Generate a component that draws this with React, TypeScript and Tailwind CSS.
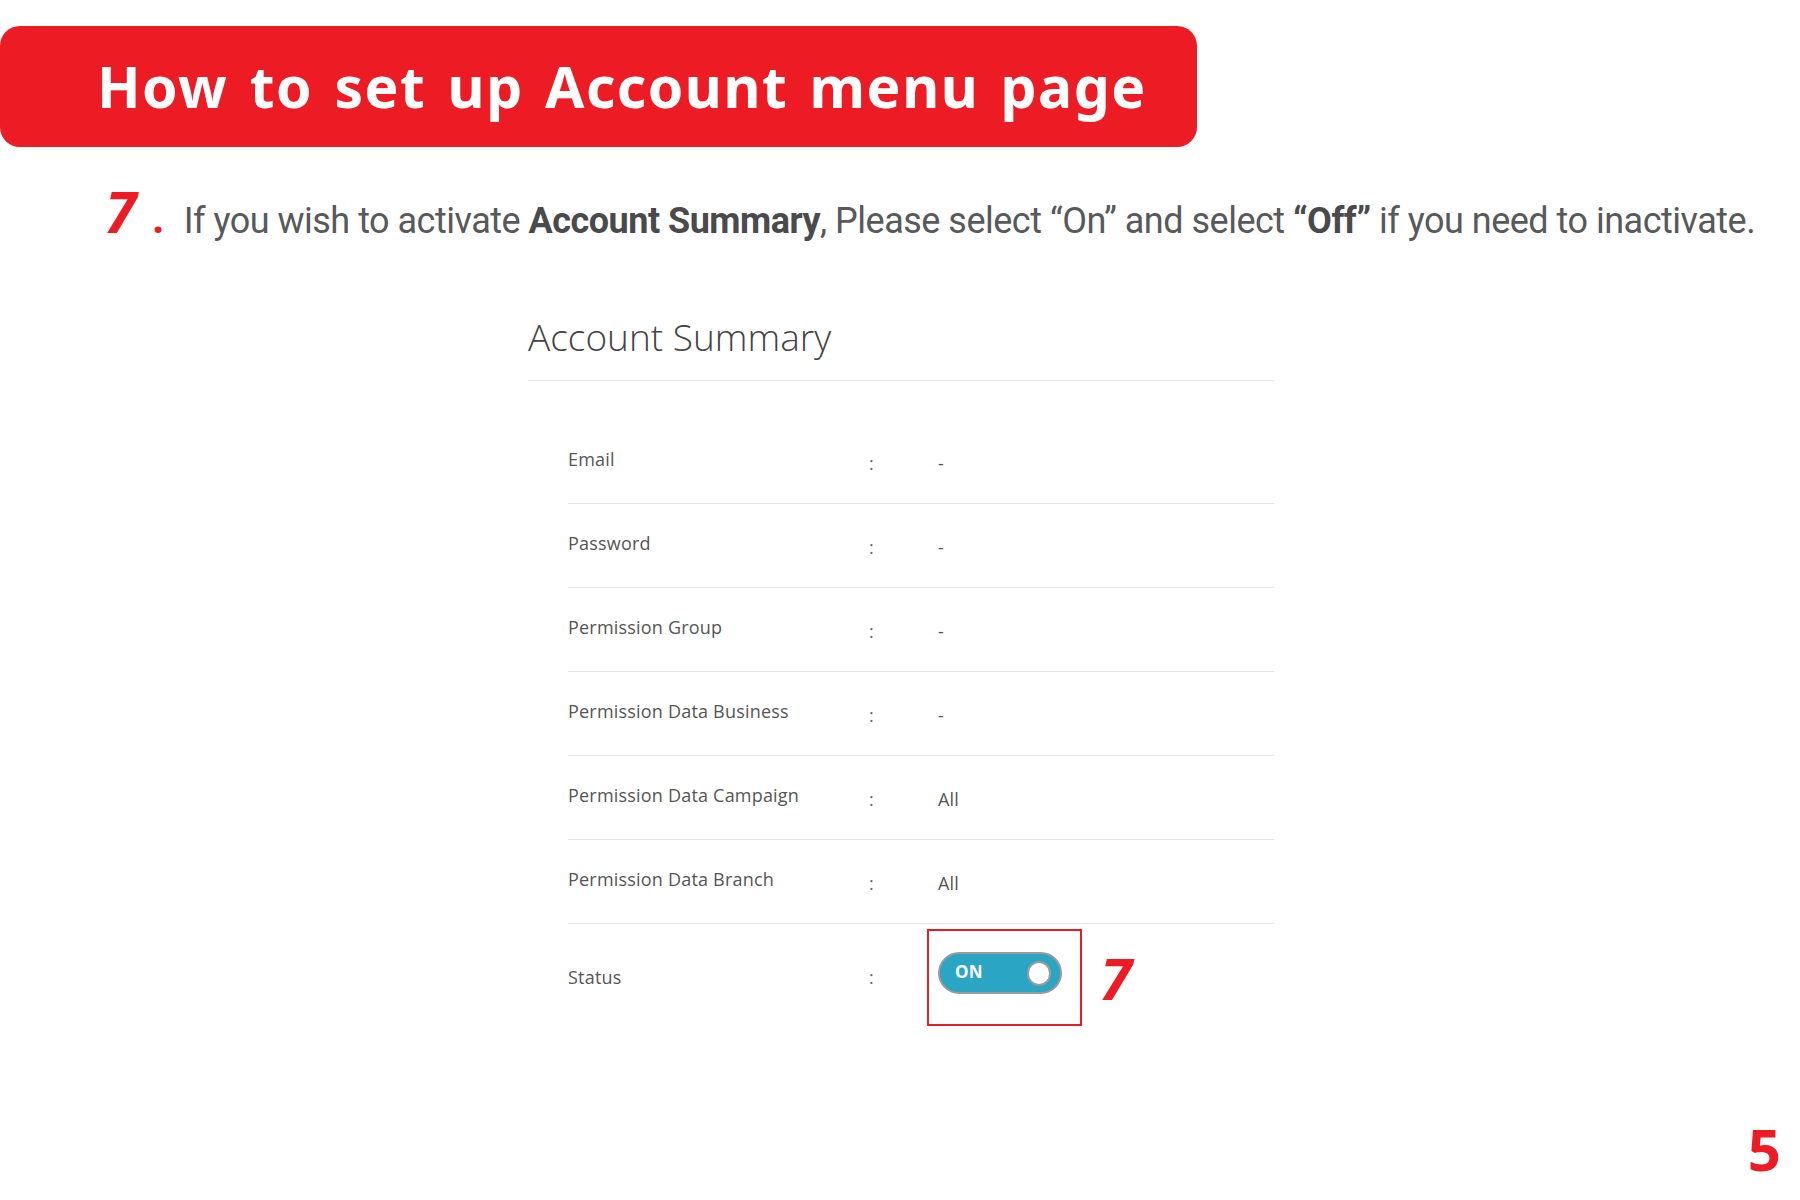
import React from "react"

const rows = [
  { label: "Email", value: "-" },
  { label: "Password", value: "-" },
  { label: "Permission Group", value: "-" },
  { label: "Permission Data Business", value: "-" },
  { label: "Permission Data Campaign", value: "All" },
  { label: "Permission Data Branch", value: "All" },
]

const StatusToggle = () => (
  <div className="w-[124px] h-[42px] rounded-full border-2 border-[#9b9b9b] bg-[#2aa5c4] flex items-center justify-between pl-[15px] pr-[9px]">
    <span className="text-white font-bold text-[17px] leading-none mb-[3px]">ON</span>
    <span className="w-[24px] h-[25px] rounded-full bg-white border-2 border-[#9b9b9b]" />
  </div>
)

export default function App() {
  return (
    <div className="w-[1800px] h-[1200px] bg-white flex flex-col overflow-hidden font-['Noto_Sans',sans-serif]">
      {/* Banner */}
      <div className="mt-[26px] h-[121px] w-[1197px] rounded-[20px] bg-[#ed1c24] flex items-center pl-[97px]">
        <h1 className="text-white font-bold text-[57px] leading-none tracking-[1.5px] [word-spacing:5px]">
          How to set up Account menu page
        </h1>
      </div>

      {/* Step line */}
      <div className="mt-[36px] flex items-baseline pl-[105px] leading-none">
        <span className="text-[#ed1c24] font-bold italic text-[57px]">7</span>
        <span className="text-[#ed1c24] font-bold text-[40px] ml-[16px]">.</span>
        <p className="ml-[20px] text-[36px] text-[#58595b] tracking-[-0.5px] font-['Roboto',sans-serif]">
          If you wish to activate <b className="text-[#4a4a4c]">Account Summary</b>, Please select “On” and select{" "}
          <b className="text-[#4a4a4c]">“Off”</b> if you need to inactivate.
        </p>
      </div>

      {/* Account Summary panel */}
      <div className="ml-[528px] w-[746px] mt-[78px] font-['Open_Sans',sans-serif]">
        <h2 className="text-[37px] font-light text-[#444] leading-none pb-[25px] border-b border-[#e5e5e5]">
          Account Summary
        </h2>

        <div className="ml-[40px] mt-[39px]">
          {rows.map((r) => (
            <div key={r.label} className="h-[84px] flex items-center border-b border-[#e5e5e5] text-[18px] tracking-[0.2px] text-[#555]">
              <span className="w-[301px] pb-[5px]">{r.label}</span>
              <span className="w-[69px] pt-[3px] text-[#666]">:</span>
              <span className="pt-[3px]">{r.value}</span>
            </div>
          ))}

          <div className="flex items-center pt-[5px] text-[18px] tracking-[0.2px] text-[#555]">
            <span className="w-[301px]">Status</span>
            <span className="w-[69px] text-[#666]">:</span>
            <div className="-ml-[11px] w-[155px] h-[97px] border-2 border-[#e41e26] pl-[9px] pt-[21px]">
              <StatusToggle />
            </div>
            <span className="ml-[18px] text-[#ed1c24] font-bold italic text-[58px] leading-none font-['Noto_Sans',sans-serif]">
              7
            </span>
          </div>
        </div>
      </div>

      {/* Page number */}
      <div className="mt-auto flex justify-end pr-[19px] pb-[22px]">
        <span className="text-[#ed1c24] font-bold text-[58px] leading-none">5</span>
      </div>
    </div>
  )
}
